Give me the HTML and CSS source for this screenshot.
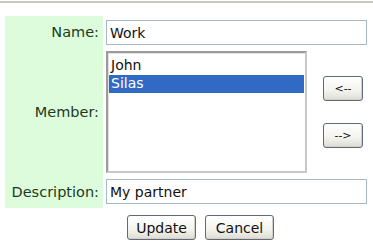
FILE: index.html
```html
<!DOCTYPE html>
<html>
<head>
<meta charset="utf-8">
<link rel="stylesheet" href="styles.css">
</head>
<body>
<div class="topline"></div>
<form class="form">
  <div class="grid">
    <div class="label">Name:</div>
    <div class="field first"><input class="text" type="text" value="Work"></div>
    <div class="label">Member:</div>
    <div class="field member">
      <div class="list">
        <div class="opt">John</div>
        <div class="opt sel">Silas</div>
      </div>
      <div class="moves">
        <button type="button" class="btn small">&lt;--</button>
        <button type="button" class="btn small">--&gt;</button>
      </div>
    </div>
    <div class="label">Description:</div>
    <div class="field last"><input class="text" type="text" value="My partner"></div>
  </div>
  <div class="actions">
    <button type="button" class="btn big">Update</button>
    <button type="button" class="btn big">Cancel</button>
  </div>
</form>
</body>
</html>
```

FILE: styles.css
```css
html, body { margin: 0; padding: 0; background: #fff; }
body { font-family: "DejaVu Sans", Verdana, sans-serif; font-size: 14px; color: #000; }
.topline { height: 2px; margin-top: 1px; background: #c8c8c2; }
.form { padding: 13px 6px 0 5px; }
.grid { display: grid; grid-template-columns: 98px 261px; column-gap: 3px; }
.label { background: #dcfcdc; color: #1e3a1e; font-size: 14.5px; padding-right: 4px; display: flex; align-items: center; justify-content: flex-end; }
.field { padding: 3px 0; }
.field.first { padding-top: 4px; }
.field.last { padding-bottom: 4px; }
.text { box-sizing: border-box; width: 261px; height: 25px; margin: 0; border: 1px solid #a5b9cc; padding: 1px 3px 0; font: 14px "DejaVu Sans", Verdana, sans-serif; color: #111; background: #fff; outline: none; }
.member { display: flex; align-items: center; gap: 16px; }
.list { box-sizing: border-box; width: 201px; height: 122px; border: 2px solid #9c9c9c; border-right-color: #c8c8c8; border-bottom-color: #c8c8c8; box-shadow: inset 1px 1px 0 #e0e0e0; padding: 4px 0 0 1px; background: #fff; }
.opt { height: 18px; line-height: 17px; padding-left: 2px; margin-right: 1px; color: #111; }
.opt.sel { background: #316ac5; color: #fff; }
.moves { display: flex; flex-direction: column; gap: 22px; }
.btn { box-sizing: border-box; border: 1px solid #5f6b78; border-radius: 3px; background: linear-gradient(#ffffff, #f3f3ee 60%, #dedcd2); font: 13px "DejaVu Sans", Verdana, sans-serif; color: #111; padding: 0; margin: 0; height: 25px; box-shadow: inset -1px -1px 0 #d4d0c8; }
.btn.small { width: 40px; font-size: 11px; }
.btn.big { width: 69px; font-size: 14px; }
.actions { display: flex; gap: 9px; padding: 7px 0 0 122px; }
```
